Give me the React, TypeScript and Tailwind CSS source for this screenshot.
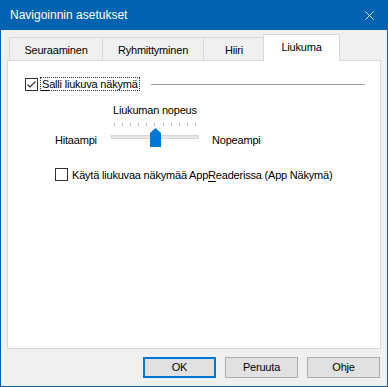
import { X } from "lucide-react";

const tabs = [
  { label: "Seuraaminen", w: "w-[93px]" },
  { label: "Ryhmittyminen", w: "w-[101px]" },
  { label: "Hiiri", w: "w-[62px]" },
];

function Checkbox({ checked }: { checked?: boolean }) {
  return (
    <span className="w-[13px] h-[13px] border border-[#333333] bg-white flex items-center justify-center shrink-0">
      {checked && (
        <svg width="11" height="11" viewBox="0 0 11 11">
          <path d="M1.5 5.5 L4 8 L9.5 2.5" fill="none" stroke="#333333" strokeWidth="1.2" />
        </svg>
      )}
    </span>
  );
}

function Slider() {
  const ticks = Array.from({ length: 11 });
  return (
    <div className="relative w-[88px] h-[26px] shrink-0">
      <div className="flex justify-between px-[3px]">
        {ticks.map((_, i) => (
          <span key={i} className="w-px h-[3px] bg-[#c4c4c4]" />
        ))}
      </div>
      <div className="mt-[9px] h-[4px] bg-[#e7e7e7] border border-[#d6d6d6]" />
      <svg
        className="absolute left-[39px] top-[5px]"
        width="11"
        height="19"
        viewBox="0 0 11 19"
      >
        <path d="M0 5 L5.5 0 L11 5 V19 H0 Z" fill="#0078d7" />
      </svg>
    </div>
  );
}

function DialogButton({ label, primary }: { label: string; primary?: boolean }) {
  return (
    <button
      className={
        primary
          ? "w-[73px] h-[21px] bg-[#e1e1e1] border-2 border-[#0078d7] text-black text-[11px] leading-none"
          : "w-[73px] h-[21px] bg-[#e1e1e1] border border-[#adadad] text-black text-[11px] leading-none"
      }
    >
      {label}
    </button>
  );
}

export default function App() {
  return (
    <div className="w-[388px] h-[387px] bg-[#f0f0f0] border-x border-b border-[#0063b1] flex flex-col font-['Liberation_Sans',sans-serif] text-[11px] tracking-[-0.2px] text-black select-none">
      <div className="h-[30px] bg-[#0063b1] flex items-center justify-between pl-[9px] pr-[10px] text-white text-[12px] tracking-normal shrink-0">
        <span>Navigoinnin asetukset</span>
        <X size={15} strokeWidth={1.3} className="text-white" />
      </div>

      <div className="px-[6px] pt-[4px] flex flex-col">
        <div className="h-[26px] flex items-end pl-[2px]">
          {tabs.map((t, i) => (
            <div
              key={t.label}
              className={`${t.w} h-[23px] border-t border-l ${i === tabs.length - 1 ? "border-r" : ""} border-[#d9d9d9] bg-[#f0f0f0] flex items-center justify-center pt-[2px]`}
            >
              {t.label}
            </div>
          ))}
          <div className="relative -ml-[2px] -mb-px w-[77px] h-[27px] bg-white border-t border-x border-[#d9d9d9] flex items-center justify-center pb-[1px]">
            Liukuma
          </div>
        </div>

        <div className="h-[289px] bg-white border border-[#d9d9d9] pl-[17px] pr-[15px] pt-[16px]">
          <div className="flex items-center h-[14px]">
            <Checkbox checked />
            <span className="ml-[2px] px-px border border-dotted border-[#333333] leading-[12px]">
              <span className="underline underline-offset-2">S</span>alli liukuva näkymä
            </span>
            <div className="ml-[11px] flex-1 h-px bg-[#a0a0a0]" />
          </div>

          <div className="mt-[12px] ml-[88px] leading-[14px]">Liukuman nopeus</div>

          <div className="flex items-start mt-[6px] ml-[30px]">
            <span className="w-[56px] mt-[10px] leading-[14px]">Hitaampi</span>
            <Slider />
            <span className="ml-[13px] mt-[10px] leading-[14px]">Nopeampi</span>
          </div>

          <div className="flex items-center mt-[19px] ml-[30px] h-[13px]">
            <Checkbox />
            <span className="ml-[4px] leading-[14px]">
              Käytä liukuvaa näkymää App<span className="underline underline-offset-2">R</span>eaderissa (App Näkymä)
            </span>
          </div>
        </div>
      </div>

      <div className="mt-[8px] flex justify-end gap-[9px] pr-[7px]">
        <DialogButton label="OK" primary />
        <DialogButton label="Peruuta" />
        <DialogButton label="Ohje" />
      </div>
    </div>
  );
}
